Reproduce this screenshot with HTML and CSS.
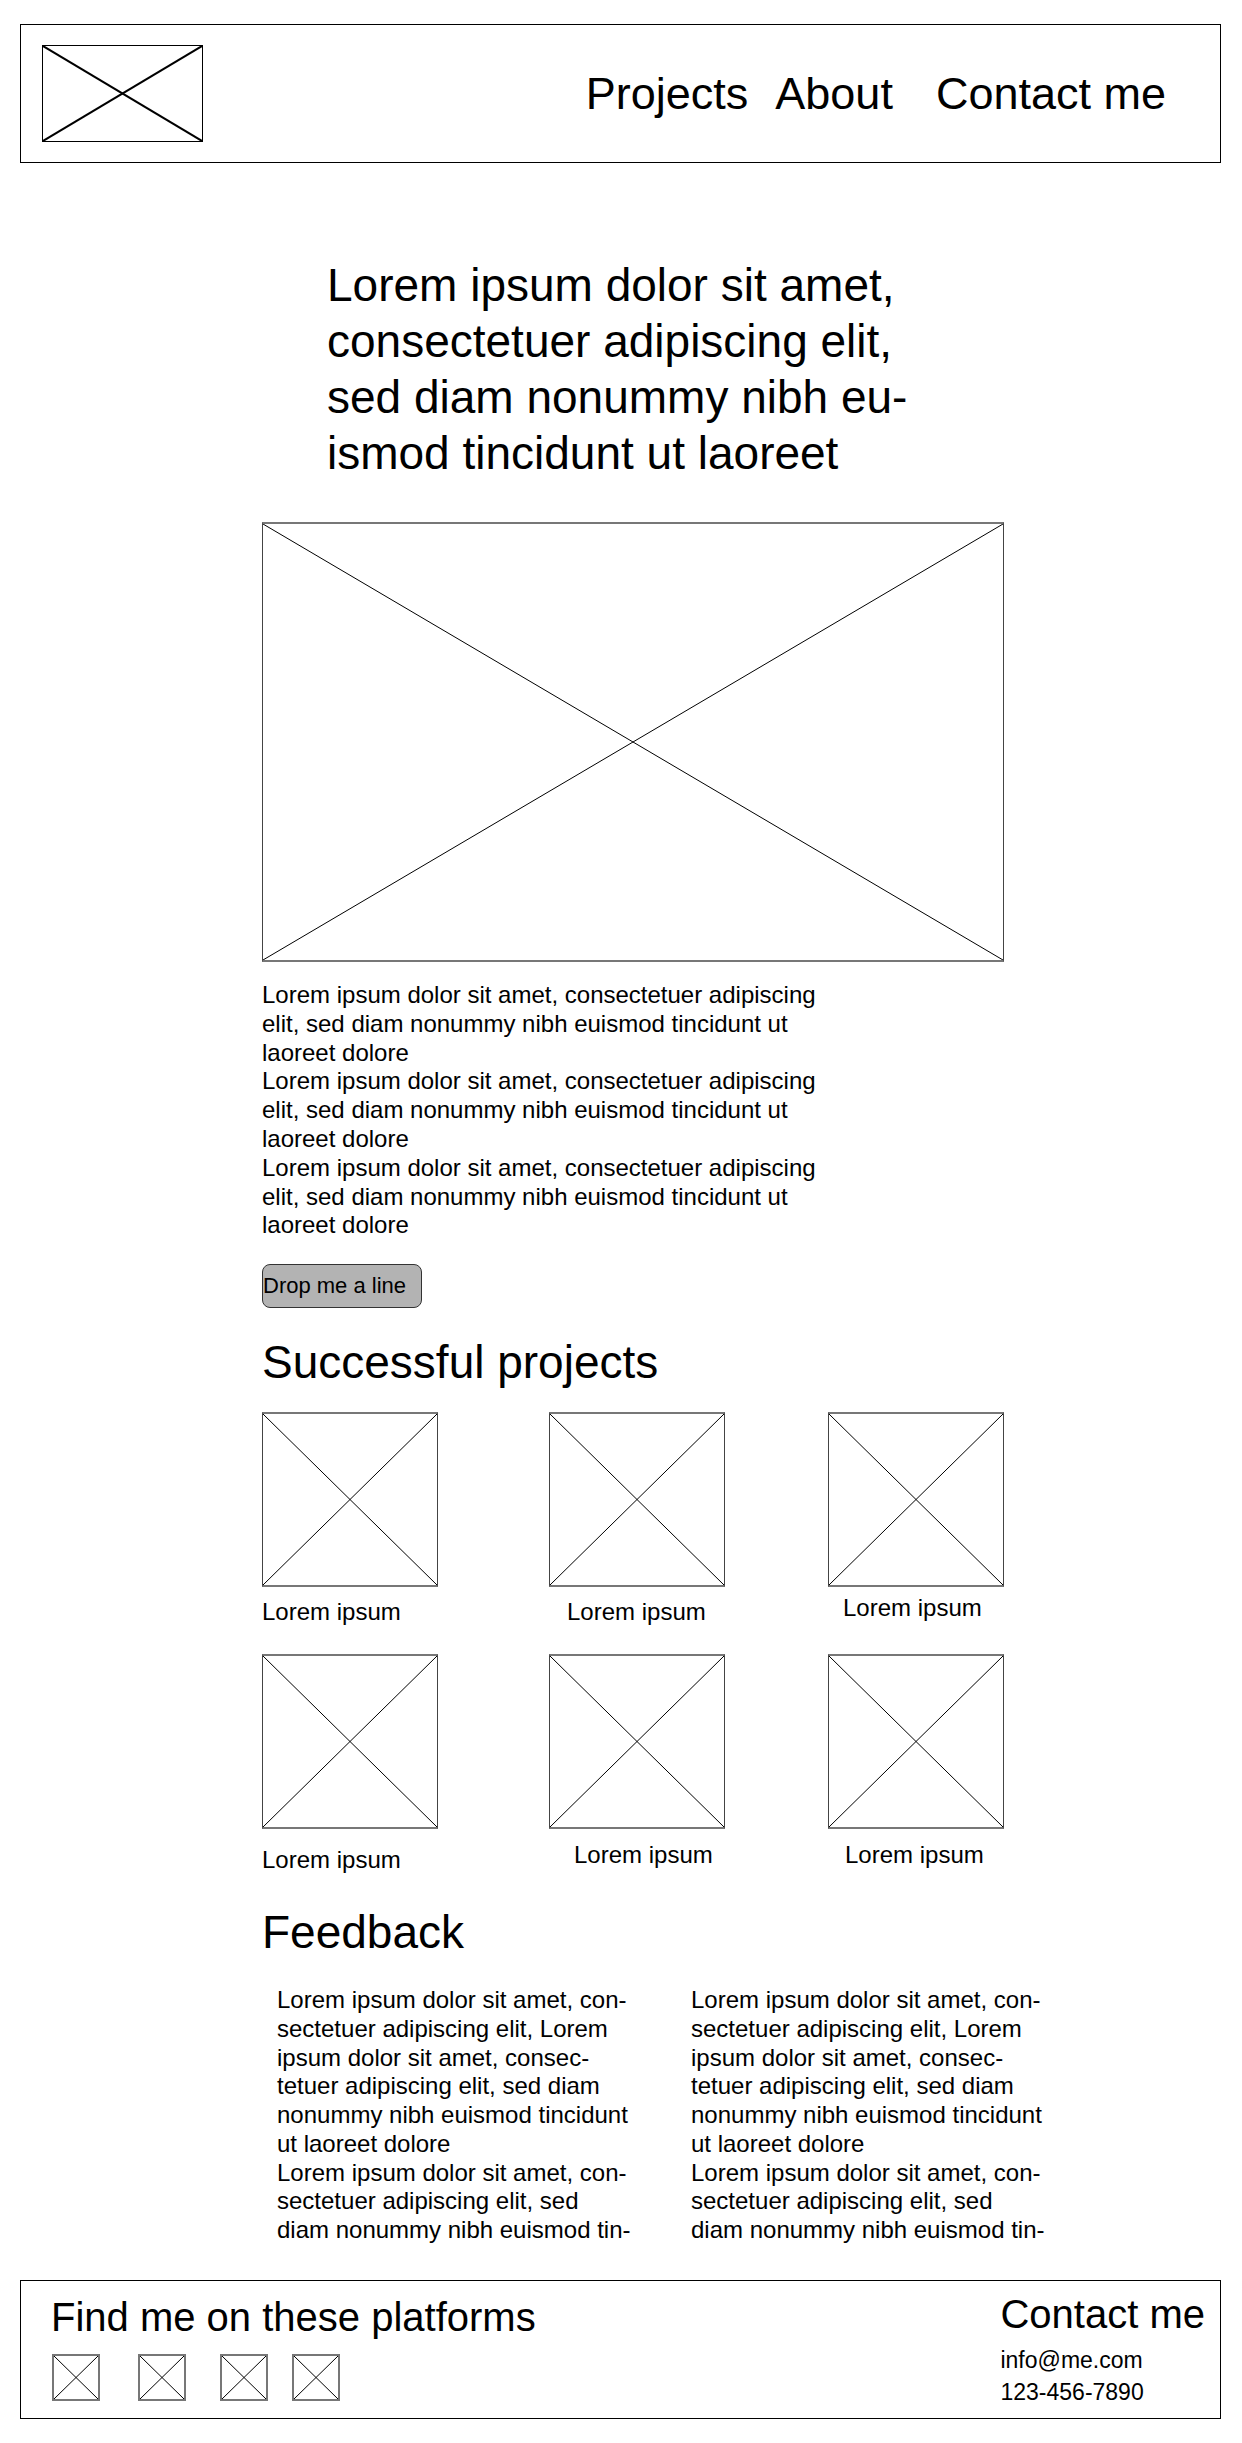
FILE: index.html
```html
<!DOCTYPE html>
<html lang="en">
<head>
    <meta charset="UTF-8">
    <meta name="viewport" content="width=device-width, initial-scale=1.0">
    <title>Portfolio Wireframe</title>
    <link rel="stylesheet" href="styles.css">
</head>
<body>
<header class="site-header">
    <div class="logo">
        <svg viewBox="0 0 100 100" preserveAspectRatio="none"><line x1="0" y1="0" x2="100" y2="100"/><line x1="100" y1="0" x2="0" y2="100"/></svg>
    </div>
    <nav class="nav">
        <a href="#projects">Projects</a>
        <a href="#about">About</a>
        <a href="#contact" class="nav-contact">Contact me</a>
    </nav>
</header>

<main class="content">
    <h1 class="hero">Lorem ipsum dolor sit amet,<br>consectetuer adipiscing elit,<br>sed diam nonummy nibh eu-<br>ismod tincidunt ut laoreet</h1>

    <div class="ph big-image">
        <svg viewBox="0 0 100 100" preserveAspectRatio="none"><line x1="0" y1="0" x2="100" y2="100"/><line x1="100" y1="0" x2="0" y2="100"/></svg>
    </div>

    <div class="intro" id="about">
        <p>Lorem ipsum dolor sit amet, consectetuer adipiscing elit, sed diam nonummy nibh euismod tincidunt ut laoreet dolore</p>
        <p>Lorem ipsum dolor sit amet, consectetuer adipiscing elit, sed diam nonummy nibh euismod tincidunt ut laoreet dolore</p>
        <p>Lorem ipsum dolor sit amet, consectetuer adipiscing elit, sed diam nonummy nibh euismod tincidunt ut laoreet dolore</p>
    </div>

    <button type="button" class="btn">Drop me a line</button>

    <h2 class="section-title" id="projects">Successful projects</h2>
    <div class="projects">
        <div class="project">
            <div class="ph thumb"><svg viewBox="0 0 100 100" preserveAspectRatio="none"><line x1="0" y1="0" x2="100" y2="100"/><line x1="100" y1="0" x2="0" y2="100"/></svg></div>
            <div class="caption">Lorem ipsum</div>
        </div>
        <div class="project">
            <div class="ph thumb"><svg viewBox="0 0 100 100" preserveAspectRatio="none"><line x1="0" y1="0" x2="100" y2="100"/><line x1="100" y1="0" x2="0" y2="100"/></svg></div>
            <div class="caption">Lorem ipsum</div>
        </div>
        <div class="project">
            <div class="ph thumb"><svg viewBox="0 0 100 100" preserveAspectRatio="none"><line x1="0" y1="0" x2="100" y2="100"/><line x1="100" y1="0" x2="0" y2="100"/></svg></div>
            <div class="caption">Lorem ipsum</div>
        </div>
        <div class="project">
            <div class="ph thumb"><svg viewBox="0 0 100 100" preserveAspectRatio="none"><line x1="0" y1="0" x2="100" y2="100"/><line x1="100" y1="0" x2="0" y2="100"/></svg></div>
            <div class="caption">Lorem ipsum</div>
        </div>
        <div class="project">
            <div class="ph thumb"><svg viewBox="0 0 100 100" preserveAspectRatio="none"><line x1="0" y1="0" x2="100" y2="100"/><line x1="100" y1="0" x2="0" y2="100"/></svg></div>
            <div class="caption">Lorem ipsum</div>
        </div>
        <div class="project">
            <div class="ph thumb"><svg viewBox="0 0 100 100" preserveAspectRatio="none"><line x1="0" y1="0" x2="100" y2="100"/><line x1="100" y1="0" x2="0" y2="100"/></svg></div>
            <div class="caption">Lorem ipsum</div>
        </div>
    </div>

    <h2 class="section-title feedback-title">Feedback</h2>
    <div class="feedback">
        <p>Lorem ipsum dolor sit amet, con-<br>sectetuer adipiscing elit, Lorem<br>ipsum dolor sit amet, consec-<br>tetuer adipiscing elit, sed diam<br>nonummy nibh euismod tincidunt<br>ut laoreet dolore<br>Lorem ipsum dolor sit amet, con-<br>sectetuer adipiscing elit, sed<br>diam nonummy nibh euismod tin-</p>
        <p>Lorem ipsum dolor sit amet, con-<br>sectetuer adipiscing elit, Lorem<br>ipsum dolor sit amet, consec-<br>tetuer adipiscing elit, sed diam<br>nonummy nibh euismod tincidunt<br>ut laoreet dolore<br>Lorem ipsum dolor sit amet, con-<br>sectetuer adipiscing elit, sed<br>diam nonummy nibh euismod tin-</p>
    </div>
</main>

<footer class="site-footer" id="contact">
    <div class="platforms">
        <h3>Find me on these platforms</h3>
        <div class="icons">
            <div class="ph icon"><svg viewBox="0 0 100 100" preserveAspectRatio="none"><line x1="0" y1="0" x2="100" y2="100"/><line x1="100" y1="0" x2="0" y2="100"/></svg></div>
            <div class="ph icon"><svg viewBox="0 0 100 100" preserveAspectRatio="none"><line x1="0" y1="0" x2="100" y2="100"/><line x1="100" y1="0" x2="0" y2="100"/></svg></div>
            <div class="ph icon"><svg viewBox="0 0 100 100" preserveAspectRatio="none"><line x1="0" y1="0" x2="100" y2="100"/><line x1="100" y1="0" x2="0" y2="100"/></svg></div>
            <div class="ph icon"><svg viewBox="0 0 100 100" preserveAspectRatio="none"><line x1="0" y1="0" x2="100" y2="100"/><line x1="100" y1="0" x2="0" y2="100"/></svg></div>
        </div>
    </div>
    <div class="contact">
        <h3>Contact me</h3>
        <p>info@me.com</p>
        <p>123-456-7890</p>
    </div>
</footer>
</body>
</html>
```

FILE: styles.css
```css
* {
    box-sizing: border-box;
}
body {
    font-family: "Liberation Sans", Arial, sans-serif;
    color: #000;
    background: #fff;
    margin: 0;
}
a {
    color: #000;
    text-decoration: none;
}

/* placeholder boxes with a cross */
.ph svg {
    display: block;
    width: 100%;
    height: 100%;
}
.ph line {
    stroke: #000;
    stroke-width: 1;
    vector-effect: non-scaling-stroke;
}
.ph {
    border-top: 2px solid #777;
    border-bottom: 2px solid #777;
    border-left: 1px solid #444;
    border-right: 1px solid #444;
}

.site-header {
    display: flex;
    align-items: center;
    justify-content: space-between;
    height: 139px;
    margin: 24px 21px 0 20px;
    padding: 0 54px 0 21px;
    border: 1px solid #000;
}
.logo {
    width: 161px;
    height: 97px;
    border: 1px solid #000;
}
.logo svg {
    display: block;
    width: 100%;
    height: 100%;
}
.logo line {
    stroke: #000;
    stroke-width: 2;
    vector-effect: non-scaling-stroke;
}
.nav {
    display: flex;
    gap: 27px;
    font-size: 45px;
}
.nav-contact {
    margin-left: 16px;
}

.content {
    padding-left: 262px;
}
.hero {
    margin: 94px 0 0;
    padding-left: 65px;
    font-size: 46px;
    font-weight: normal;
    line-height: 56px;
}
.big-image {
    width: 742px;
    height: 440px;
    margin-top: 41px;
}
.intro {
    width: 570px;
    margin-top: 19px;
    font-size: 24px;
    line-height: 28.8px;
}
.intro p {
    margin: 0;
}
.btn {
    display: block;
    width: 160px;
    height: 44px;
    margin-top: 24px;
    padding: 0;
    text-align: left;
    font-family: inherit;
    font-size: 22px;
    color: #000;
    background: #b3b3b3;
    border: 1px solid #333;
    border-radius: 8px;
}

.section-title {
    margin: 28px 0 0;
    font-size: 46px;
    font-weight: normal;
    line-height: 53px;
}
.projects {
    display: grid;
    grid-template-columns: 287px 279px 176px;
    row-gap: 28px;
    margin-top: 23px;
}
.thumb {
    width: 176px;
    height: 175px;
}
.caption {
    margin-top: 11px;
    font-size: 24px;
    line-height: 28px;
    white-space: nowrap;
}
.project:nth-child(2) .caption {
    padding-left: 18px;
}
.project:nth-child(3) .caption {
    padding-left: 15px;
    margin-top: 7px;
}
.project:nth-child(4) .caption {
    margin-top: 17px;
}
.project:nth-child(5) .caption {
    padding-left: 25px;
    margin-top: 12px;
}
.project:nth-child(6) .caption {
    padding-left: 17px;
    margin-top: 12px;
}

.feedback-title {
    margin-top: 32px;
}
.feedback {
    display: grid;
    grid-template-columns: 414px 1fr;
    margin-top: 27px;
    padding-left: 15px;
    font-size: 24px;
    line-height: 28.75px;
}
.feedback p {
    margin: 0;
}

.site-footer {
    display: flex;
    justify-content: space-between;
    height: 139px;
    margin: 35px 21px 0 20px;
    padding: 10px 15px 0 30px;
    border: 1px solid #000;
}
.platforms h3 {
    margin: 3px 0 0;
    font-size: 40px;
    font-weight: normal;
    line-height: 46px;
}
.icons {
    display: flex;
    gap: 34px;
    margin: 14px 0 0 1px;
}
.icon {
    width: 48px;
    height: 47px;
    border: 2px solid #777;
}
.icon:nth-child(2) {
    margin-left: 4px;
}
.icon:nth-child(4) {
    margin-left: -10px;
}
.contact h3 {
    margin: 0;
    font-size: 40px;
    font-weight: normal;
    line-height: 46px;
}
.contact p {
    margin: 0;
    font-size: 23px;
    line-height: 32px;
}
.contact h3 + p {
    margin-top: 7px;
}
```
